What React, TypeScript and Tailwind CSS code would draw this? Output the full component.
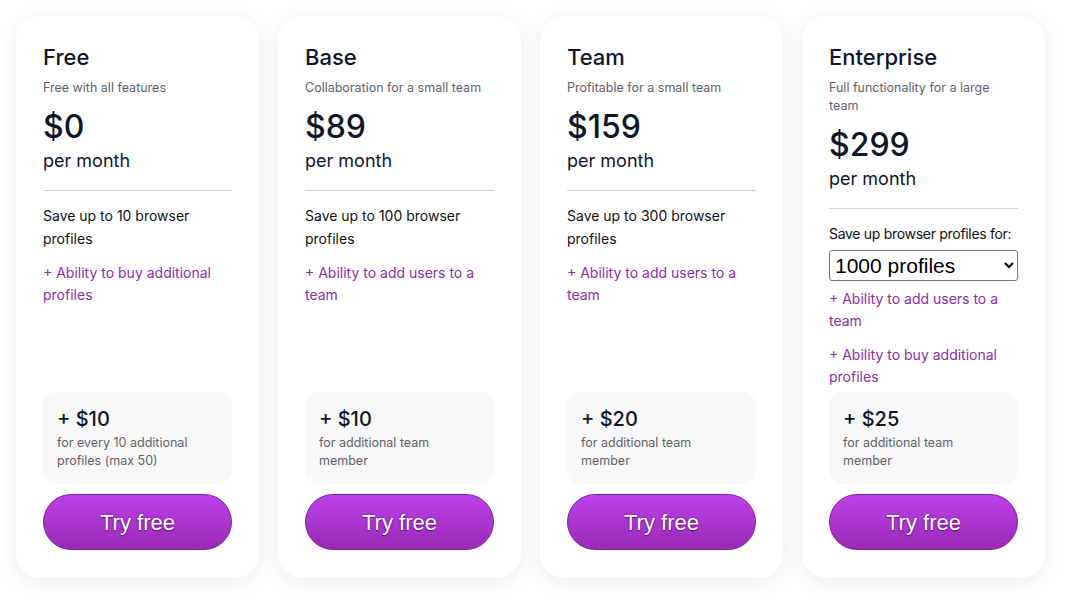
import React from "react";

type Plan = {
  name: string;
  subtitle: string;
  price: string;
  save?: string;
  extras: string[];
  addon: string;
  addonNote: string;
  select?: boolean;
};

const plans: Plan[] = [
  {
    name: "Free",
    subtitle: "Free with all features",
    price: "$0",
    save: "Save up to 10 browser profiles",
    extras: ["+ Ability to buy additional profiles"],
    addon: "+ $10",
    addonNote: "for every 10 additional profiles (max 50)",
  },
  {
    name: "Base",
    subtitle: "Collaboration for a small team",
    price: "$89",
    save: "Save up to 100 browser profiles",
    extras: ["+ Ability to add users to a team"],
    addon: "+ $10",
    addonNote: "for additional team member",
  },
  {
    name: "Team",
    subtitle: "Profitable for a small team",
    price: "$159",
    save: "Save up to 300 browser profiles",
    extras: ["+ Ability to add users to a team"],
    addon: "+ $20",
    addonNote: "for additional team member",
  },
  {
    name: "Enterprise",
    subtitle: "Full functionality for a large team",
    price: "$299",
    extras: ["+ Ability to add users to a team", "+ Ability to buy additional profiles"],
    addon: "+ $25",
    addonNote: "for additional team member",
    select: true,
  },
];

function PlanCard({ plan }: { plan: Plan }) {
  return (
    <div className="flex h-[562px] w-[243px] shrink-0 flex-col rounded-[24px] bg-white px-[27px] pb-[28px] pt-[27px] shadow-[0_4px_22px_rgba(0,0,0,0.08)] [&>*]:shrink-0">
      <h2 className="text-[22px] leading-[28px] font-medium text-[#0f1629]">{plan.name}</h2>
      <p className="mt-[8px] text-[12.5px] leading-[18px] text-[#5f6168]">{plan.subtitle}</p>
      <div className="mt-[11px] text-[32px] leading-[38px] font-medium text-[#0f1629]">{plan.price}</div>
      <div className="mt-[3px] text-[18px] leading-[24px] text-[#0f1629]">per month</div>
      <div className="mt-[17px] h-px bg-[#d4d4d8]" />

      {plan.select ? (
        <>
          <p className="mt-[14px] whitespace-nowrap text-[14px] leading-[22px] tracking-[-0.3px] text-[#111]">
            Save up browser profiles for:
          </p>
          <select
            defaultValue="1000"
            className="mt-[5px] h-[31px] w-full rounded-[3px] border border-[#767676] bg-white px-[1px] text-[21px] text-black"
            style={{ fontFamily: '"Liberation Sans", Arial, sans-serif', appearance: "auto" }}
          >
            <option value="500">500 profiles</option>
            <option value="1000">1000 profiles</option>
            <option value="2000">2000 profiles</option>
          </select>
          <div className="mt-[7px] flex flex-col gap-[12px]">
            {plan.extras.map((e) => (
              <p key={e} className="text-[14px] leading-[22px] text-[#8a2fa6]">{e}</p>
            ))}
          </div>
        </>
      ) : (
        <>
          <p className="mt-[13px] text-[14px] leading-[23px] text-[#111]">{plan.save}</p>
          {plan.extras.map((e) => (
            <p key={e} className="mt-[12px] text-[14px] leading-[22px] text-[#8a2fa6]">{e}</p>
          ))}
        </>
      )}

      <div className="mt-auto rounded-[14px] bg-[#f8f8f8] px-[14px] pb-[14px] pt-[14px]">
        <div className="text-[20px] leading-[26px] font-medium text-[#0f1629]">{plan.addon}</div>
        <p className="mt-[2px] pr-[30px] text-[12.5px] leading-[18px] text-[#5f6168]">{plan.addonNote}</p>
      </div>

      <button
        type="button"
        className="mt-[10px] h-[56px] w-full rounded-full border border-[#7d1f99] bg-gradient-to-b from-[#bb42ea] to-[#9a29b6] text-[22px] text-white [text-shadow:0_0_2px_#6a137f,0_1px_1px_#6a137f]"
        style={{ fontFamily: '"Liberation Sans", Arial, sans-serif' }}
      >
        Try free
      </button>
    </div>
  );
}

export default function App() {
  return (
    <div
      className="min-h-[601px] w-[1070px] bg-white"
      style={{ fontFamily: 'Inter, "Noto Sans", sans-serif' }}
    >
      <div className="flex gap-[19px] px-[16px] pt-[16px]">
        {plans.map((p) => (
          <PlanCard key={p.name} plan={p} />
        ))}
      </div>
    </div>
  );
}
